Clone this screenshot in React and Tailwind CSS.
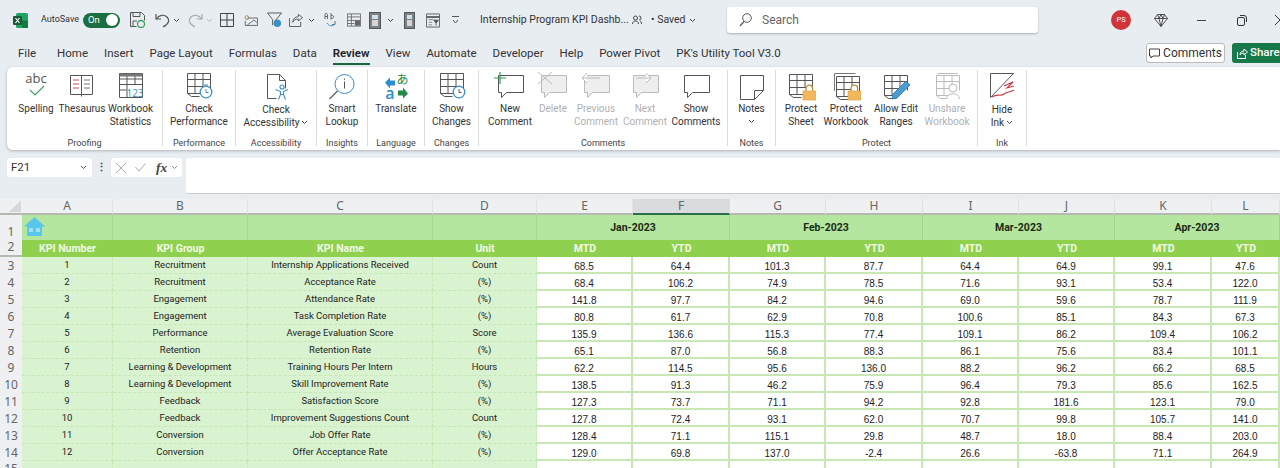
import React from 'react';

const data = [
    [1, 'Recruitment', 'Internship Applications Received', 'Count', '68.5', '64.4', '101.3', '87.7', '64.4', '64.9', '99.1', '47.6'],
    [2, 'Recruitment', 'Acceptance Rate', '(%)', '68.4', '106.2', '74.9', '78.5', '71.6', '93.1', '53.4', '122.0'],
    [3, 'Engagement', 'Attendance Rate', '(%)', '141.8', '97.7', '84.2', '94.6', '69.0', '59.6', '78.7', '111.9'],
    [4, 'Engagement', 'Task Completion Rate', '(%)', '80.8', '61.7', '62.9', '70.8', '100.6', '85.1', '84.3', '67.3'],
    [5, 'Performance', 'Average Evaluation Score', 'Score', '135.9', '136.6', '115.3', '77.4', '109.1', '86.2', '109.4', '106.2'],
    [6, 'Retention', 'Retention Rate', '(%)', '65.1', '87.0', '56.8', '88.3', '86.1', '75.6', '83.4', '101.1'],
    [7, 'Learning & Development', 'Training Hours Per Intern', 'Hours', '62.2', '114.5', '95.6', '136.0', '88.2', '96.2', '66.2', '68.5'],
    [8, 'Learning & Development', 'Skill Improvement Rate', '(%)', '138.5', '91.3', '46.2', '75.9', '96.4', '79.3', '85.6', '162.5'],
    [9, 'Feedback', 'Satisfaction Score', '(%)', '127.3', '73.7', '71.1', '94.2', '92.8', '181.6', '123.1', '79.0'],
    [10, 'Feedback', 'Improvement Suggestions Count', 'Count', '127.8', '72.4', '93.1', '62.0', '70.7', '99.8', '105.7', '141.0'],
    [11, 'Conversion', 'Job Offer Rate', '(%)', '128.4', '71.1', '115.1', '29.8', '48.7', '18.0', '88.4', '203.0'],
    [12, 'Conversion', 'Offer Acceptance Rate', '(%)', '129.0', '69.8', '137.0', '-2.4', '26.6', '-63.8', '71.1', '264.9'],
];

const tabs = ['Home', 'Insert', 'Page Layout', 'Formulas', 'Data', 'Review', 'View', 'Automate', 'Developer', 'Help', 'Power Pivot', "PK's Utility Tool V3.0"];
const colLetters = ['A', 'B', 'C', 'D', 'E', 'F', 'G', 'H', 'I', 'J', 'K', 'L'];
const months = ['Jan-2023', 'Feb-2023', 'Mar-2023', 'Apr-2023'];

const Svg = ({ w = 32, h = 30, children, className = '' }) => (
    <svg width={w} height={h} viewBox={`0 0 ${w} ${h}`} fill="none" className={className}>{children}</svg>
);

const Chevron = ({ className = 'text-[#555]' }) => (
    <svg width="7" height="5" viewBox="0 0 7 5" fill="none" className={`shrink-0 ${className}`}>
        <path d="M1 1l2.5 2.5L6 1" stroke="currentColor" strokeWidth="1" />
    </svg>
);

// table glyph shared by several ribbon buttons
const Table = ({ c = '#555', x = 0, y = 0 }) => (
    <g stroke={c} strokeWidth="1" transform={`translate(${x} ${y})`}>
        <path d="M.5 20.5V.5h23v15M.5 20.5h14M.5 6.5h23M.5 13.5h18M8 .5v20M16 .5v13" />
        <path d="M.5 20.5l4 3h8" />
    </g>
);

const Bubble = ({ c = '#555', fill = 'none' }) => (
    <path d="M5.5 3.5h25v17h-17l-5 5v-5h-3z" stroke={c} fill={fill} strokeWidth="1" />
);

const Lock = ({ x, y }) => (
    <g transform={`translate(${x} ${y})`}>
        <path d="M3 6V3.500a3.300 3.300 0 016.600 0V6" stroke="#b98a3a" strokeWidth="1.300" fill="#fff" />
        <rect x="0" y="6" width="13" height="9" fill="#f2b95c" stroke="#dc9e3e" strokeWidth=".6" />
    </g>
);

const icons = {
    spelling: (
        <Svg w={32}>
            <text x="16" y="11" textAnchor="middle" fontSize="13" fontFamily="Open Sans" fill="#555">abc</text>
            <path d="M10 18l5 5 9-9" stroke="#3f9f5f" strokeWidth="1.1" />
        </Svg>
    ),
    thesaurus: (
        <Svg w={30}>
            <path d="M3.5 3.5h11v19h-11zM14.5 3.5h11v19h-11zM14.5 22.5v2" stroke="#555" strokeWidth="1" />
            <path d="M6 8h6M6 12h6M6 16h6" stroke="#c8505a" strokeWidth="1" />
            <path d="M17 8h6M17 12h6M17 16h6" stroke="#777" strokeWidth="1" />
        </Svg>
    ),
    stats: (
        <Svg w={28}>
            <path d="M2.5 1.5h23v24h-23zM2.5 7h23M2.5 12.5h23M2.5 18h7M10 1.5V25M18 1.5v11" stroke="#555" strokeWidth="1" fill="none" />
            <rect x="2.5" y="1.5" width="23" height="3" fill="#777" />
            <text x="18" y="25" textAnchor="middle" fontSize="10" fontFamily="Open Sans" fill="#3d8fc4">123</text>
        </Svg>
    ),
    performance: (
        <Svg w={30}>
            <Table x={3} y={1} />
            <circle cx="22" cy="20" r="5.8" fill="#fff" stroke="#3d8fc4" strokeWidth="1.3" />
            <path d="M22 17v3.500h2.500M20 13h4" stroke="#3d8fc4" strokeWidth="1" />
        </Svg>
    ),
    accessibility: (
        <Svg w={30} h={30}>
            <path d="M6.5 2.500h12l6 6v8M6.5 2.500v24h9M18.5 2.500v6h6" stroke="#555" strokeWidth="1" />
            <circle cx="21" cy="15" r="2" stroke="#3d8fc4" strokeWidth="1.1" />
            <path d="M14.5 17.500l5 2v3l-2 5M27 17.500l-4.500 2v3l2 5M19.500 22.500h3" stroke="#3d8fc4" strokeWidth="1.1" />
        </Svg>
    ),
    lookup: (
        <Svg w={30}>
            <circle cx="17.500" cy="12" r="9.500" stroke="#3d8fc4" strokeWidth="1" />
            <path d="M17.500 9.500v7M17.500 6.500v1.300" stroke="#555" strokeWidth="1" />
            <path d="M10.500 19l-8 8" stroke="#555" strokeWidth="1.100" />
        </Svg>
    ),
    translate: (
        <Svg w={30}>
            <path d="M4 10.500l5-5v3h5v5H9v3z" fill="#2a8fcc" />
            <path d="M27 21.500l-5 5v-3h-5v-5h5v-3z" fill="#1f8a4c" />
            <text x="21.500" y="12" textAnchor="middle" fontSize="12" fontFamily="Noto Sans CJK JP" fill="#1f8a4c">あ</text>
            <text x="9" y="27" textAnchor="middle" fontSize="16" fontWeight="600" fontFamily="Open Sans" fill="#2a8fcc">a</text>
        </Svg>
    ),
    changes: (
        <Svg w={30}>
            <Table x={3} y={1} />
            <circle cx="22" cy="20" r="5.800" fill="#fff" stroke="#3d8fc4" strokeWidth="1.300" />
            <path d="M22 17v3.500h2.500" stroke="#555" strokeWidth="1" />
        </Svg>
    ),
    newComment: (
        <Svg w={34}>
            <Bubble />
            <path d="M7 0v12M1 6h12" stroke="#2f9e57" strokeWidth="1.200" />
        </Svg>
    ),
    deleteComment: (
        <Svg w={34}>
            <Bubble c="#bbb" fill="#eee" />
            <path d="M2 0l14 12M16 0L2 12" stroke="#bbb" strokeWidth="1" />
        </Svg>
    ),
    prevComment: (
        <Svg w={34}>
            <Bubble c="#bbb" fill="#eee" />
            <path d="M3 6h18M8 1L3 6l5 5" stroke="#bbb" strokeWidth="1" fill="#fff" />
        </Svg>
    ),
    nextComment: (
        <Svg w={34}>
            <Bubble c="#bbb" fill="#eee" />
            <path d="M8 6h15M18 1l5 5-5 5" stroke="#bbb" strokeWidth="1" fill="#fff" />
        </Svg>
    ),
    showComments: (
        <Svg w={34}>
            <Bubble />
        </Svg>
    ),
    notes: (
        <Svg w={30}>
            <path d="M3.500 3.500h23v15l-9 9h-14zM26.500 18.500h-9v9" stroke="#555" strokeWidth="1" />
        </Svg>
    ),
    protectSheet: (
        <Svg w={30}>
            <Table x={3} y={2} />
            <Lock x={17} y={13} />
        </Svg>
    ),
    protectWorkbook: (
        <Svg w={30}>
            <path d="M3.500 19V1.500h21" stroke="#777" strokeWidth="1" />
            <Table x={5} y={4} />
            <Lock x={17} y={13} />
        </Svg>
    ),
    allowEdit: (
        <Svg w={30}>
            <Table x={3} y={3} />
            <path d="M11 27l1-5 13-13 4 4-13 13z" fill="#4b9cd3" stroke="#2a78b0" strokeWidth=".8" />
        </Svg>
    ),
    unshare: (
        <Svg w={30}>
            <path d="M5.500 1.500h20" stroke="#bbb" strokeWidth="1" />
            <Table c="#bbb" x={4} y={3} />
            <circle cx="21" cy="16" r="4" fill="#fff" stroke="#bbb" />
            <path d="M14.500 27c0-7 13-7 13 0" fill="#fff" stroke="#bbb" />
        </Svg>
    ),
    hideInk: (
        <Svg w={30}>
            <path d="M3.500 1.500h23L3.500 25.500z" stroke="#555" strokeWidth="1" />
            <path d="M17 14l9-4-6 6 7-2M5 25c6-4 8 0 12-3s5-1 10-4" stroke="#c23a48" strokeWidth="1.100" />
        </Svg>
    ),
};

const groups = [
    { label: 'Proofing', w: 'w-[156px]', pl: 'pl-[6px]', items: [
        { icon: 'spelling', lines: ['Spelling'], w: 'w-[46px]' },
        { icon: 'thesaurus', lines: ['Thesaurus'], w: 'w-[46px]' },
        { icon: 'stats', lines: ['Workbook', 'Statistics'], w: 'w-[51px]' },
    ] },
    { label: 'Performance', w: 'w-[73px]', items: [{ icon: 'performance', lines: ['Check', 'Performance'], w: 'w-full' }] },
    { label: 'Accessibility', w: 'w-[81px]', items: [{ icon: 'accessibility', lines: ['Check', 'Accessibility'], chev: true, w: 'w-full', low: true }] },
    { label: 'Insights', w: 'w-[51px]', items: [{ icon: 'lookup', lines: ['Smart', 'Lookup'], w: 'w-full' }] },
    { label: 'Language', w: 'w-[57px]', items: [{ icon: 'translate', lines: ['Translate'], w: 'w-full' }] },
    { label: 'Changes', w: 'w-[54px]', items: [{ icon: 'changes', lines: ['Show', 'Changes'], w: 'w-full' }] },
    { label: 'Comments', w: 'w-[249px]', pl: 'pl-[8px]', items: [
        { icon: 'newComment', lines: ['New', 'Comment'], w: 'w-[46px]' },
        { icon: 'deleteComment', lines: ['Delete'], w: 'w-[40px]', off: true },
        { icon: 'prevComment', lines: ['Previous', 'Comment'], w: 'w-[46px]', off: true },
        { icon: 'nextComment', lines: ['Next', 'Comment'], w: 'w-[52px]', off: true },
        { icon: 'showComments', lines: ['Show', 'Comments'], w: 'w-[50px]' },
    ] },
    { label: 'Notes', w: 'w-[48px]', items: [{ icon: 'notes', lines: ['Notes', ''], chev: true, w: 'w-full' }] },
    { label: 'Protect', w: 'w-[202px]', pl: 'pl-[2px]', items: [
        { icon: 'protectSheet', lines: ['Protect', 'Sheet'], w: 'w-[46px]' },
        { icon: 'protectWorkbook', lines: ['Protect', 'Workbook'], w: 'w-[44px]' },
        { icon: 'allowEdit', lines: ['Allow Edit', 'Ranges'], w: 'w-[56px]' },
        { icon: 'unshare', lines: ['Unshare', 'Workbook'], w: 'w-[46px]', off: true },
    ] },
    { label: 'Ink', w: 'w-[49px]', items: [{ icon: 'hideInk', lines: ['Hide', 'Ink'], chev: true, w: 'w-full', low: true }] },
];

function QuickAccess() {
    return (
        <div className="flex items-center text-[#555] shrink-0">
            <svg width="15" height="16" viewBox="0 0 15 16" fill="none" className="shrink-0">
                <path d="M.5.500h11l3 3v5M.5.500v14h6M3 .500v4h7v-4M3 15V9h4" stroke="#555" />
                <circle cx="11" cy="12" r="3.500" stroke="#3f9f5f" strokeWidth="1.300" />
            </svg>
            <svg width="15" height="15" viewBox="0 0 15 15" fill="none" className="ml-[10px] shrink-0">
                <path d="M1 1v5h5M1.500 6C4 2 9 1 12 4s2 7-4 10" stroke="#555" strokeWidth="1.200" />
            </svg>
            <Chevron className="ml-[3px] text-[#444]" />
            <svg width="15" height="15" viewBox="0 0 15 15" fill="none" className="ml-[8px] shrink-0">
                <path d="M14 1v5H9M13.500 6C11 2 6 1 3 4s-2 7 4 10" stroke="#aaa" strokeWidth="1.200" />
            </svg>
            <Chevron className="ml-[3px] text-[#bbb]" />
            <svg width="14" height="14" viewBox="0 0 15 15" fill="none" className="ml-[7px] shrink-0">
                <path d="M.5.500h14v14H.5zM7.500.500v14M.5 7.500h14" stroke="#333" />
            </svg>
            <svg width="14" height="11" viewBox="0 0 17 13" fill="none" className="ml-[10px] shrink-0">
                <path d="M4 3.500h12.500v9H1.500V7M4 12l8-6 4 3" stroke="#555" />
                <circle cx="3.500" cy="3" r="2.300" stroke="#8a7b55" />
            </svg>
            <svg width="15" height="16" viewBox="0 0 16 17" fill="none" className="ml-[9px] shrink-0">
                <path d="M.5 1h15L9 9v4M.5 1L6 8v6" stroke="#555" />
                <circle cx="11" cy="12" r="4" fill="#3d8fc4" />
            </svg>
            <svg width="14" height="14" viewBox="0 0 15 15" fill="none" className="ml-[7px] shrink-0">
                <path d="M.5 5.500v9h12v-5M4 10c0-4 3-6 6-6V1.500L14.500 5 10 8.500V6.500c-3 0-5 1-6 3.500z" stroke="#555" />
            </svg>
            <Chevron className="ml-[5px] text-[#444]" />
            <svg width="13" height="17" viewBox="0 0 13 17" fill="none" className="ml-[9px] shrink-0">
                <path d="M1 7V2.500C1 1 3 1 3.500 2.500V7M1 4.500h2.500M7 1v6.500M7 3.500c3-1 4 3 0 3M11 9v3.500H8" stroke="#6b6b6b" />
                <path d="M3 11c2 3 5 4 8 1" stroke="#3d8fc4" />
            </svg>
            <svg width="14" height="14" viewBox="0 0 16 15" fill="none" className="ml-[10px] shrink-0">
                <path d="M.5.500h15v14H.5zM.5 4h15M.5 8h15M.5 11.500h8M5 .500v14" stroke="#666" />
                <rect x="9" y="8" width="6" height="6" fill="#666" />
            </svg>
            <div className="ml-[8px] w-[12px] h-[17px] shrink-0 bg-[#7d8288] border border-[#555] flex flex-col p-[2px] gap-[1px]">
                <div className="h-[4px] bg-[#cfe3ee]" />
                <div className="flex-1 bg-[#d5d5d5]" />
            </div>
            <Chevron className="ml-[6px] text-[#444]" />
            <div className="ml-[10px] w-[11px] h-[17px] shrink-0 bg-[#7d8288] border border-[#555] flex flex-col p-[2px] gap-[1px]">
                <div className="h-[4px] bg-[#cfe3ee]" />
                <div className="flex-1 bg-[#d5d5d5]" />
            </div>
            <svg width="14" height="15" viewBox="0 0 16 16" fill="none" className="ml-[11px] shrink-0">
                <path d="M.5.500h15v15H.5z" stroke="#555" />
                <path d="M.5 4h15" stroke="#555" strokeWidth="2" />
                <path d="M3 7h5M3 10h4M3 13h4" stroke="#777" />
                <path d="M8 7h7l-3 4v3h-1v-3z" fill="#555" />
            </svg>
            <svg width="7" height="8" viewBox="0 0 7 8" fill="none" className="ml-[12px] shrink-0">
                <path d="M0 .500h7M1 4l2.500 3L6 4" stroke="#555" />
            </svg>
        </div>
    );
}

function TitleBar() {
    return (
        <div className="h-[40px] flex items-center">
            <svg width="15" height="15" viewBox="0 0 15 15" className="ml-[13px] shrink-0">
                <rect x="3" y="0" width="12" height="15" rx="1.500" fill="#21a366" />
                <rect x="9" y="7.500" width="6" height="7.500" fill="#107c41" />
                <rect x="0" y="3" width="9" height="9" rx="1" fill="#185c37" />
                <path d="M2.500 5l4 5M6.500 5l-4 5" stroke="#fff" strokeWidth="1.200" />
            </svg>
            <span className="ml-[13px] w-[37px] shrink-0 text-[9px] text-[#333] whitespace-nowrap">AutoSave</span>
            <div className="ml-[5px] w-[37px] h-[15px] shrink-0 rounded-full bg-[#1b6e42] flex items-center justify-between pl-[5px] pr-[2px]">
                <span className="text-[9.5px] text-white leading-none">On</span>
                <div className="w-[12px] h-[12px] rounded-full bg-white" />
            </div>
            <div className="ml-[10px] shrink-0"><QuickAccess /></div>
            <span className="ml-[21px] w-[142px] shrink-0 text-[10.5px] text-[#333] whitespace-nowrap">Internship Program KPI Dashb...</span>
            <svg width="10" height="10" viewBox="0 0 10 10" fill="none" className="ml-[10px] shrink-0">
                <circle cx="3.500" cy="3" r="2" stroke="#444" />
                <path d="M.5 9c0-4 6-4 6 0M7 1a2 2 0 010 4M8 6c1 .5 1.500 1.500 1.500 3" stroke="#444" />
            </svg>
            <span className="ml-[9px] w-[35px] shrink-0 text-[10.5px] text-[#333] whitespace-nowrap">• Saved</span>
            <Chevron className="ml-[3px] text-[#444]" />
            <div className="ml-[31px] w-[311px] h-[26px] mt-[-1px] shrink-0 bg-white rounded-[3px] shadow-[0_1px_2px_rgba(0,0,0,0.25)] flex items-center pl-[12px]">
                <svg width="13" height="14" viewBox="0 0 13 14" fill="none">
                    <circle cx="8" cy="5" r="4.300" stroke="#555" />
                    <path d="M5 8.500L1 13" stroke="#555" strokeWidth="1.200" />
                </svg>
                <span className="ml-[10px] text-[12px] text-[#666]">Search</span>
            </div>
            <div className="ml-[73px] w-[20px] h-[20px] shrink-0 rounded-full bg-[#d13438] flex items-center justify-center text-white text-[7.5px]">PS</div>
            <svg width="14" height="13" viewBox="0 0 14 13" fill="none" className="ml-[23px] shrink-0">
                <path d="M3.500.500h7L13.500 4.500 7 12.500.5 4.500zM.5 4.500h13M5 4.500L7 12.500l2-8M3.500.500L5 4.500 7 .500l2 4 1.500-4" stroke="#444" strokeWidth=".9" />
            </svg>
            <div className="ml-[29px] w-[9px] h-px shrink-0 bg-[#444]" />
            <svg width="10" height="11" viewBox="0 0 10 11" fill="none" className="ml-[31px] shrink-0">
                <rect x=".5" y="2.500" width="7" height="8" rx="1.500" stroke="#333" />
                <path d="M3 .500h4a2.500 2.500 0 012.500 2.500v4" stroke="#333" />
            </svg>
            <svg width="10" height="10" viewBox="0 0 10 10" fill="none" className="ml-[28px] shrink-0">
                <path d="M0 0l10 10M10 0L0 10" stroke="#333" />
            </svg>
        </div>
    );
}

function TabBar() {
    return (
        <div className="h-[27px] flex items-start text-[11.5px] text-[#333] whitespace-nowrap">
            <span className="ml-[18px] mt-[5px] leading-[17px]">File</span>
            <div className="ml-[21px] flex gap-[16px]">
                {tabs.map((t) => (
                    <div key={t} className="flex flex-col items-center pt-[5px]">
                        <span className={`leading-[17px] ${t === 'Review' ? 'font-semibold text-[#222]' : ''}`}>{t}</span>
                        {t === 'Review' && <div className="w-full h-[2px] mt-px bg-[#17683d]" />}
                    </div>
                ))}
            </div>
            <div className="ml-auto mt-[3px] flex gap-[7px] w-[134px] shrink-0">
                <div className="w-[79px] h-[20px] shrink-0 bg-white border border-[#bbb] rounded-[3px] flex items-center justify-center gap-[3px] text-[12px]">
                    <svg width="11" height="11" viewBox="0 0 11 11" fill="none">
                        <path d="M.5 1h10v7H4l-2 2V8H.5z" stroke="#444" />
                    </svg>
                    Comments
                </div>
                <div className="w-[48px] h-[20px] shrink-0 bg-[#17794a] rounded-l-[3px] flex items-center pl-[5px] gap-[2px] text-white text-[11.5px] font-medium">
                    <svg width="11" height="11" viewBox="0 0 11 11" fill="none" className="shrink-0">
                        <path d="M.5 4v6.500h8V7M3 7c0-3 2-4 4-4V1l3.500 3L7 7V5C5 5 4 5.500 3 7z" stroke="#fff" />
                    </svg>
                    Share
                </div>
            </div>
        </div>
    );
}

function Ribbon() {
    return (
        <div className="h-[83px] ml-[7px] pt-[3px] bg-white rounded-l-[6px] shadow-[0_1px_3px_rgba(0,0,0,0.25)] flex">
            {groups.map((g) => (
                <div key={g.label} className={`${g.w} h-[76px] shrink-0 flex flex-col border-r border-[#dcdcdc]`}>
                    <div className={`flex flex-1 ${g.pl || ''}`}>
                        {g.items.map((b) => (
                            <div key={b.icon} className={`${b.w} shrink-0 flex flex-col items-center pt-[2px]`}>
                                <div className={`h-[30px] flex justify-center ${b.low ? 'mb-[1px]' : ''}`}>{icons[b.icon]}</div>
                                <div className={`text-[10px] leading-[13px] text-center whitespace-nowrap ${b.off ? 'text-[#b0b0b0]' : 'text-[#333]'}`}>
                                    {b.lines.map((l, i) => (
                                        <div key={i} className="flex items-center justify-center gap-[2px] h-[13px]">
                                            {l}
                                            {b.chev && i === b.lines.length - 1 && <Chevron className="text-[#444]" />}
                                        </div>
                                    ))}
                                </div>
                            </div>
                        ))}
                    </div>
                    <div className="text-[9px] leading-[12px] mb-[-3px] text-center text-[#444] whitespace-nowrap">{g.label}</div>
                </div>
            ))}
        </div>
    );
}

function FormulaBar() {
    return (
        <div className="h-[49px] flex items-start pt-[8px] pl-[7px] gap-0">
            <div className="w-[85px] h-[19px] bg-white rounded-[3px] flex items-center justify-between pl-[4px] pr-[5px] text-[11.5px] text-[#333]">
                F21
                <Chevron />
            </div>
            <div className="w-[19px] h-[19px] flex items-center justify-center text-[#444] text-[11px] font-bold leading-none">⋮</div>
            <div className="w-[71px] h-[19px] bg-white rounded-[3px] flex items-center pl-[5px]">
                <svg width="10" height="10" viewBox="0 0 10 10" fill="none"><path d="M0 0l10 10M10 0L0 10" stroke="#aaa" /></svg>
                <svg width="11" height="9" viewBox="0 0 11 9" fill="none" className="ml-[9px]"><path d="M.5 4l3.500 4L10.500 .5" stroke="#aaa" /></svg>
                <span className="ml-[10px] font-['Liberation_Serif',serif] italic font-bold text-[13.5px] leading-none text-[#444]">fx</span>
                <Chevron className="ml-[4px] text-[#888]" />
            </div>
            <div className="ml-[4px] flex-1 h-[36px] bg-white rounded-l-[3px] border-b border-[#ccc]" />
        </div>
    );
}

const gridCols = 'grid-cols-[22px_91px_135px_185px_104px_96px_97px_96px_97px_96px_96px_97px_68px]';
const gridRows = 'grid-rows-[16px_25px_17px_17px_17px_17px_17px_17px_17px_17px_17px_17px_17px_17px_17px]';
const rowHead = 'flex items-end justify-center text-[12px] leading-[16px] text-[#666] bg-[#eef0f2] font-["Noto_Sans",sans-serif]';
const labelCell = 'flex items-center justify-center pt-[1px] bg-[#d9f2d0] border-r border-b border-dashed border-[#c6e8b6] text-[9.5px] text-[#222] whitespace-nowrap font-["Roboto",sans-serif]';
const numCell = 'flex items-center justify-center pt-[3px] bg-white border-r-2 border-b-2 border-[#c9e7b4] text-[10px] text-[#222] font-["Liberation_Sans",sans-serif]';
const headCell = 'flex items-center justify-center bg-[#8fd14f] text-[10.5px] font-bold text-[#f1fae6] font-["Roboto",sans-serif]';

function Sheet() {
    return (
        <div className={`grid ${gridCols} ${gridRows} h-[269px] bg-white overflow-hidden`}>
            {/* column letters */}
            <div className="bg-[#eef0f2] border-b-2 border-[#b4b9b2] flex items-end justify-end">
                <div className="w-0 h-0 border-l-[12px] border-l-transparent border-b-[12px] border-b-[#d5d7d9] mr-[1px] mb-[1px]" />
            </div>
            {colLetters.map((c) => (
                <div key={c} className={`flex items-center justify-center text-[12px] font-["Noto_Sans",sans-serif] text-[#666] border-b-2 border-r ${c === 'F' ? 'bg-[#d9dbdd] border-b-[#2b6e48] border-r-[#d9dbdd]' : 'bg-[#eef0f2] border-b-[#b4b9b2] border-r-[#e0e2e4]'}`}>{c}</div>
            ))}

            {/* row 1 */}
            <div className={rowHead}>1</div>
            <div className="bg-[#b5e6a0] border-r border-[#a5d88e] flex items-start pl-[2px] pt-[2px]">
                <svg width="21" height="19" viewBox="0 0 21 19" fill="none">
                    <path d="M10.500 0L0 9.500h3V19h15V9.500h3z" fill="#59c7ec" />
                    <rect x="5" y="11" width="4" height="4" fill="#9fe0f3" />
                    <rect x="12" y="11" width="4" height="4" fill="#9fe0f3" />
                </svg>
            </div>
            <div className="bg-[#b5e6a0] border-r border-[#a5d88e]" />
            <div className="bg-[#b5e6a0] border-r border-[#a5d88e]" />
            <div className="bg-[#b5e6a0] border-r border-[#a5d88e]" />
            {months.map((m) => (
                <div key={m} className="col-span-2 flex items-center justify-center bg-[#b5e6a0] border-r border-[#9fd584] text-[10.5px] font-bold text-[#1a2a14] font-['Roboto',sans-serif]">{m}</div>
            ))}

            {/* row 2 */}
            <div className={`${rowHead} border-b-2 border-[#b4b9b2]`}>2</div>
            {['KPI Number', 'KPI Group', 'KPI Name', 'Unit'].map((h) => <div key={h} className={headCell}>{h}</div>)}
            {months.flatMap((m) => ['MTD', 'YTD'].map((k) => <div key={m + k} className={headCell}>{k}</div>))}

            {/* data rows */}
            {data.map((row, i) => (
                <React.Fragment key={row[0]}>
                    <div className={rowHead}>{i + 3}</div>
                    {row.map((v, j) => (
                        <div key={j} className={j < 4 ? labelCell : numCell}>{v}</div>
                    ))}
                </React.Fragment>
            ))}

            {/* row 15, cut off by the window */}
            <div className={rowHead}>15</div>
            {colLetters.map((c, j) => <div key={c} className={j < 4 ? labelCell : numCell} />)}
        </div>
    );
}

export default function App() {
    return (
        <div className="w-[1280px] h-[468px] overflow-hidden bg-[#e8edf2] font-['Roboto',sans-serif]">
            <TitleBar />
            <TabBar />
            <Ribbon />
            <FormulaBar />
            <Sheet />
        </div>
    );
}
